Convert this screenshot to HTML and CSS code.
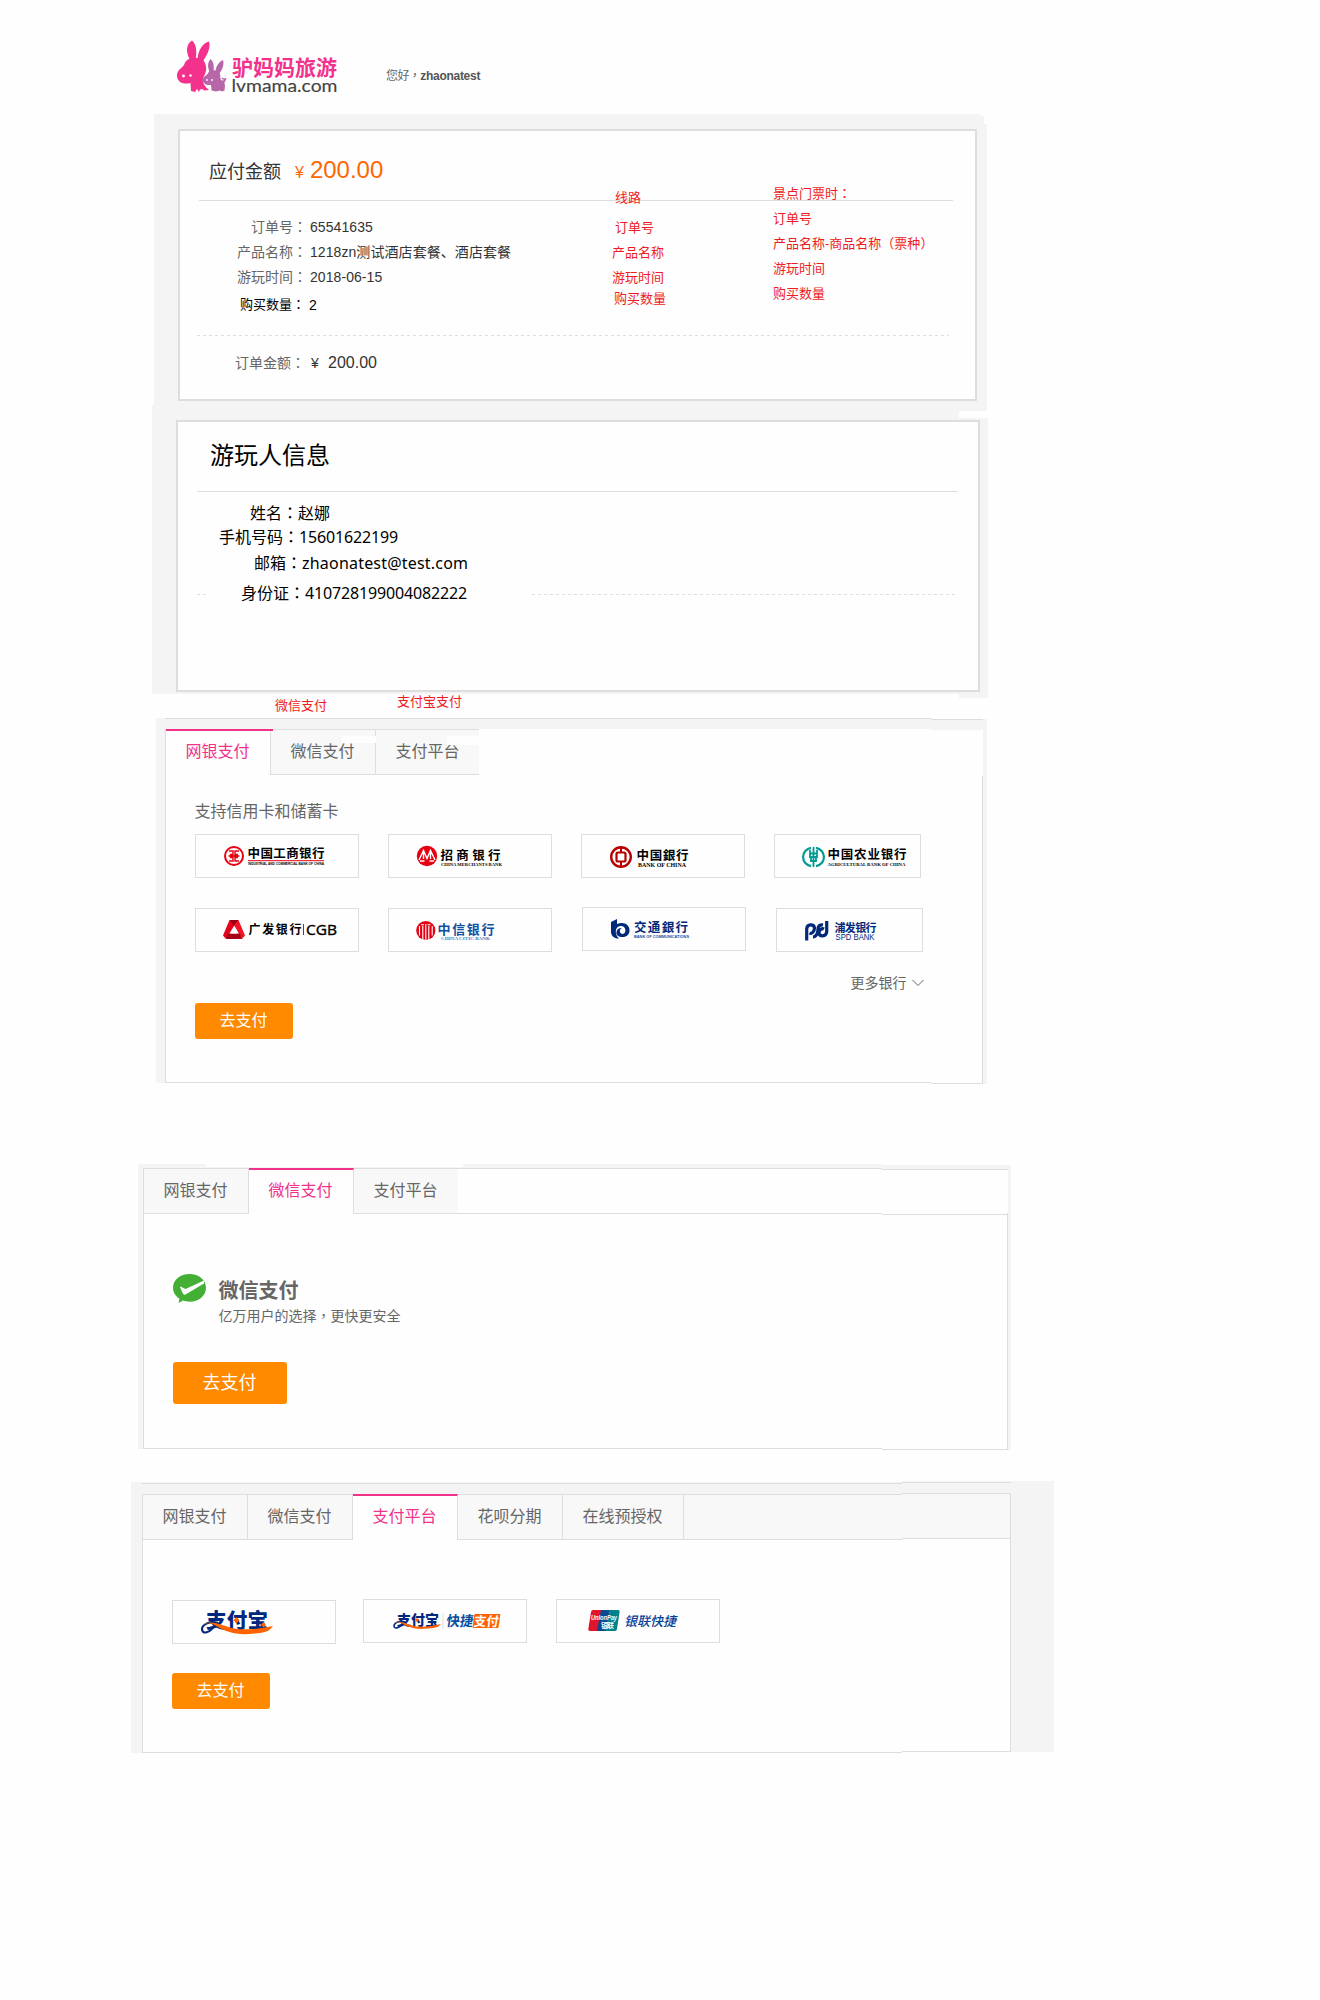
FILE: index.html
```html
<!DOCTYPE html>
<html lang="zh-CN">
<head>
<meta charset="utf-8">
<title>驴妈妈旅游 - 收银台</title>
<link rel="stylesheet" href="styles.css">
</head>
<body>
<header class="header">
  <svg class="logo" width="170" height="60" viewBox="0 0 170 60">
    <g fill="#f2328c">
      <path d="M14 22C9.500 14 10 6 16 2.500C20.500 6 21 14 19.500 22z"/>
      <path d="M21.500 21C22 12 27 5 33 3.500C35 10 31 17 27 23z"/>
      <path d="M12 21.500C16 19 25 19 28 23C31 28 31 34 27.500 39C26 43 27 47 33 52L28 52.500L26.500 51L24 51.500L23 54L21 51L19 54L15 53L14.500 45C7 47 1 44 1 37.500C1 32 6 30 8 27C9 24 10 23 12 21.500z"/>
    </g>
    <g fill="#b766a8">
      <path d="M33.500 34C31 28 32 24 34.500 21C38 24 38 29 37.500 33z"/>
      <path d="M39.500 33C40 28 43 24 47 22C48.500 27 46 32 43 36z"/>
      <path d="M33 33.500C37 31 43 32 44 36C44.500 38 44 40 45 42C46.500 43 48 42.500 47.500 41.500L45.500 41L46 39.500L48 40.500L50.500 40L49.500 43C48.500 44 48 45 49 47L48.500 52.500L46 53.500L44 52.500L40 53.500L35.500 52.500L35 47C30 47.500 26.500 45 26.500 41.500C27 38.500 31 38 33 33.500z"/>
    </g>
    <circle cx="7.500" cy="38" r="1.400" fill="#fff"/><circle cx="14.500" cy="37.500" r="1.200" fill="#fff"/><circle cx="31" cy="42" r="0.900" fill="#fff"/><circle cx="36" cy="42" r="0.900" fill="#fff"/>
    <text class="cjk heavy" x="56" y="37" font-size="21" textLength="105" fill="#f2328c">驴妈妈旅游</text>
    <text class="round" x="55.500" y="54" font-size="18" textLength="106" lengthAdjust="spacingAndGlyphs" fill="#444" stroke="#444" stroke-width=".15">lvmama.com</text>
  </svg>
  <p class="hello">您好<span class="mid-mark" lang="zh-TW">，</span><b>zhaonatest</b></p>
</header>

<section class="order">
  <div class="card order-card">
    <h2 class="due">应付金额<span class="due-sign">¥</span><span class="due-sum">200.00</span></h2>
    <hr class="rule">
    <dl class="facts">
      <dt>订单号<span class="mid-mark" lang="zh-TW">：</span></dt><dd>65541635</dd>
      <dt>产品名称<span class="mid-mark" lang="zh-TW">：</span></dt><dd>1218zn测试酒店套餐、酒店套餐</dd>
      <dt>游玩时间<span class="mid-mark" lang="zh-TW">：</span></dt><dd>2018-06-15</dd>
    </dl>
    <dl class="facts count"><dt>购买数量<span class="mid-mark" lang="zh-TW">：</span></dt><dd>2</dd></dl>
    <div class="dashes"></div>
    <div class="total"><span>订单金额<span class="mid-mark" lang="zh-TW">：</span></span><i>¥</i><b>200.00</b></div>
    <div class="note n1">线路</div>
    <div class="note n2">订单号</div>
    <div class="note n3">产品名称</div>
    <div class="note n4">游玩时间</div>
    <div class="note n5">购买数量</div>
    <div class="note n6">景点门票时<span class="mid-mark" lang="zh-TW">：</span><br>订单号<br>产品名称-商品名称<span class="mid-mark" lang="zh-TW">（</span>票种<span class="mid-mark" lang="zh-TW">）</span><br>游玩时间<br>购买数量</div>
  </div>
</section>

<section class="guest">
  <div class="card guest-card">
    <h2 class="guest-title">游玩人信息</h2>
    <hr class="rule">
    <p class="g-name">姓名<span class="mid-mark" lang="zh-TW">：</span>赵娜</p>
    <p class="g-phone">手机号码<span class="mid-mark" lang="zh-TW">：</span><span class="num">15601622199</span></p>
    <p class="g-mail">邮箱<span class="mid-mark" lang="zh-TW">：</span><span class="mail">zhaonatest@test.com</span></p>
    <div class="g-id"><span class="dashes short"></span><p>身份证<span class="mid-mark" lang="zh-TW">：</span><span class="num">410728199004082222</span></p><span class="dashes long"></span></div>
  </div>
</section>

<div class="hints"><span class="hint-a">微信支付</span><span class="hint-b">支付宝支付</span></div>

<section class="pay bank-pay">
  <div class="main">
    <div class="lid"></div>
    <div class="body">
      <nav class="tabs">
        <a class="tab on">网银支付</a><a class="tab wiped">微信支付</a><a class="tab last wiped-b">支付平台</a>
      </nav>
      <h3 class="cards-title">支持信用卡和储蓄卡</h3>
      <div class="banks">
        <div class="bank"><svg viewBox="1 1 162 42">
          <circle cx="39" cy="22" r="9" fill="none" stroke="#e60012" stroke-width="2"/>
          <path d="M34 17h4v3.500h-3M44 17h-4v3.500h3M34 27h4v-3.500h-3M44 27h-4v-3.500h3M33.500 22h11M38 17v10M40 17v10" fill="none" stroke="#e60012" stroke-width="1.400"/>
          <text class="cjk heavy" x="52.500" y="24" font-size="12.500" textLength="77">中国工商银行</text>
          <path d="M53 26.700h76" stroke="#e60012"/>
          <text class="sans heavy" x="53" y="31" font-size="3.500" textLength="76" lengthAdjust="spacingAndGlyphs">INDUSTRIAL AND COMMERCIAL BANK OF CHINA</text></svg></div>
        <div class="bank"><svg viewBox="1 1 162 42">
          <circle cx="39" cy="22" r="10.200" fill="#e60012"/>
          <path d="M31 26L35.500 16.500L39 24.500L42.500 16.500L47 26M35.500 17V25M42.500 17V25M32 27h4.500M41.500 27h4.500" fill="none" stroke="#fff" stroke-width="1.400"/>
          <text class="cjk heavy" x="52.500" y="26" font-size="12.500" textLength="60">招商银行</text>
          <text class="serif heavy" x="53" y="32" font-size="5" textLength="61" lengthAdjust="spacingAndGlyphs">CHINA MERCHANTS BANK</text></svg></div>
        <div class="bank"><svg viewBox="1 1 162 42">
          <circle cx="40" cy="23" r="9.800" fill="none" stroke="#b80000" stroke-width="2.400"/>
          <path d="M40 13v5M40 28v5" stroke="#b80000" stroke-width="2"/><rect x="35.500" y="18.500" width="9" height="9" rx="1.500" fill="none" stroke="#b80000" stroke-width="2.200"/>
          <text class="brush" x="55.500" y="25.500" font-size="12.500" textLength="52">中国銀行</text>
          <text class="serif heavy" x="57" y="33" font-size="6" textLength="48" lengthAdjust="spacingAndGlyphs">BANK OF CHINA</text></svg></div>
        <div class="bank clipped"><svg viewBox="1 1 162 42">
          <path d="M37 13.800A9.300 9.300 0 0 0 37 32.200M42 13.800A9.300 9.300 0 0 1 42 32.200" fill="none" stroke="#009b93" stroke-width="2.200"/>
          <path d="M39.500 13v20M36 16v7h7v-7M36 19.500h7M37 23v4h5v-4" fill="none" stroke="#009b93" stroke-width="1.800"/>
          <text class="cjk heavy" x="53.500" y="25" font-size="12.500" textLength="79">中国农业银行</text>
          <text class="serif heavy" x="53.500" y="32" font-size="5" textLength="78" lengthAdjust="spacingAndGlyphs">AGRICULTURAL BANK OF CHINA</text></svg></div>
      </div>
      <div class="banks second">
        <div class="bank"><svg viewBox="1 1 162 42">
          <path d="M34.500 12h9L41 18h-4z" fill="#990012"/><path d="M34.500 12L28 27.500L31 31L39 18z" fill="#e60020"/><path d="M43.500 12L50 27.500L47 31L39 17z" fill="#f01428"/><path d="M31 31L33 25.500h12L47 31z" fill="#a80014"/><path d="M39 20l3 5.500h-6z" fill="#fff"/>
          <text class="cjk heavy" x="53.500" y="26" font-size="12" textLength="53">广发银行</text>
          <path d="M108.500 16v11" stroke="#e60020"/>
          <text class="open" x="111" y="26.500" font-size="14.500" textLength="31" lengthAdjust="spacingAndGlyphs" stroke="#000" stroke-width=".4">CGB</text></svg></div>
        <div class="bank"><svg viewBox="1 1 162 42">
          <circle cx="37.800" cy="22.500" r="9.600" fill="#e60012"/>
          <path d="M37.800 16v16M34.800 18v14M40.800 18v14M31.500 18v9.500M44.200 18v9.500M33 16.800h3M39.600 16.800h3" fill="none" stroke="#fff" stroke-width="1.100"/>
          <text class="brush" x="49.500" y="25.500" font-size="13" textLength="57" fill="#0f4fa2">中信银行</text>
          <text class="serif heavy" x="53" y="32" font-size="5" textLength="49" lengthAdjust="spacingAndGlyphs" fill="#3f7cc0">CHINA CITIC BANK</text></svg></div>
        <div class="bank raised"><svg viewBox="1 1 162 42">
          <path d="M29 15L35 12V17C42 14 48 18 47.500 24C47 30 41 31 37 29.500C32 27 35 20 40 21C37 22 37 27 41 27C45 26 44 19 39 19C33 19 32 27 37 31.500C33 32 29 29 29 25z" fill="#00297a"/>
          <text class="brush" x="52" y="24.500" font-size="12.500" textLength="54" fill="#00297a">交通銀行</text>
          <text class="sans heavy" x="52" y="31" font-size="4" textLength="55" lengthAdjust="spacingAndGlyphs" fill="#2a4c94">BANK OF COMMUNICATIONS</text></svg></div>
        <div class="bank clipped shifted"><svg viewBox="1 1 162 42">
          <path d="M30.700 32.500V21C31 15.500 38 16 38.500 20C38.500 24 35.500 26 33.500 25M37 29C40 29 42 25 42 21C42 16 47 17 47 17M50.700 13V24C50 29 43.500 29 43 25C43 21.500 46 20 48 21" fill="none" stroke="#00297a" stroke-width="3.200"/>
          <text class="cjk heavy" x="58.500" y="23.500" font-size="11" textLength="42" fill="#00297a">浦发银行</text>
          <text class="sans" x="59.500" y="32" font-size="8.500" textLength="39" lengthAdjust="spacingAndGlyphs" fill="#00297a">SPD BANK</text></svg></div>
      </div>
      <div class="more">更多银行<svg width="12" height="8" viewBox="0 0 12 8"><path d="M.5 1L6 6.500L11.500 1" fill="none" stroke="#666"/></svg></div>
      <a class="btn">去支付</a>
    </div>
  </div>
  <div class="tail"><div class="tail-box"></div></div>
</section>

<section class="pay wechat-pay">
  <div class="main">
    <div class="lid"></div>
    <div class="body">
      <nav class="tabs">
        <a class="tab">网银支付</a><a class="tab on">微信支付</a><a class="tab last">支付平台</a><span class="rest"></span>
      </nav>
      <div class="wechat">
        <svg width="33" height="30" viewBox="0 0 33 30"><path d="M16.500 0C26 0 33 6 33 13.800S26 27.800 16.500 27.800C14 27.800 12 27.300 10 26.600L5.500 29L6.500 24.800C2.500 22.300 0 18.300 0 13.800C0 6 7 0 16.500 0z" fill="#43b035"/><path d="M7.500 12.500L12.500 15L31 6.500V9.500L12.500 20.500C10.500 21.500 9.500 19 7 13z" fill="#fff"/></svg>
        <div><h3>微信支付</h3><p>亿万用户的选择<span class="mid-mark" lang="zh-TW">，</span>更快更安全</p></div>
      </div>
      <a class="btn big">去支付</a>
    </div>
  </div>
  <div class="tail"><div class="tail-box"></div></div>
</section>

<section class="pay platform-pay">
  <div class="main">
    <div class="lid"></div>
    <div class="body">
      <nav class="tabs">
        <a class="tab">网银支付</a><a class="tab">微信支付</a><a class="tab on">支付平台</a><a class="tab">花呗分期</a><a class="tab wide">在线预授权</a><span class="rest"></span>
      </nav>
      <div class="platforms">
        <div class="bank lowered"><svg viewBox="1 1 162 42">
          <text class="cjk black" x="34" y="27.500" font-size="20.500" textLength="62" fill="#00287c">支付宝</text>
          <path d="M46 23C38 20 30 25 30 29C30 35 38 33 43 25" fill="none" stroke="#00287c" stroke-width="2.200"/>
          <path d="M31 25C40 18 53 28 66 29C78 30 88 28.500 101 26C97 32 91 33 82 33.500C64 36 53 31 46 27C40 23 36 22 31 25z" fill="#ff6300"/>
          <path d="M64.500 17l3 3.200-3 3.200-3-3.200zM91.500 22l2.500 2.700-2.500 2.700-2.500-2.700z" fill="#ff6300"/></svg></div>
        <div class="bank"><svg viewBox="1 1 162 42">
          <text class="cjk black" x="34" y="26" font-size="14" textLength="42" fill="#00287c">支付宝</text>
          <path d="M42 23C36 21 31 24 31 27C31 30 36 30 40 24" fill="none" stroke="#00287c" stroke-width="1.600"/>
          <path d="M31 24C38 20 46 27 54 27.500C62 28 70 27 78 25C75 29 71 29 65 29.500C52 31 45 28 40 25C37 23 34 23 31 24z" fill="#ff6300"/>
          <path d="M54 19l2 2-2 2-2-2z" fill="#ff6300"/><path d="M80 14v16" stroke="#ddd"/>
          <g transform="skewX(-8)"><text class="cjk heavy" x="86.500" y="27.500" font-size="14" textLength="27" lengthAdjust="spacingAndGlyphs" fill="#0b4f9e">快捷</text>
          <rect x="113.500" y="15" width="26" height="14" rx="1" fill="#ff6300"/><text class="cjk heavy" x="114" y="27" font-size="13" textLength="25" lengthAdjust="spacingAndGlyphs" fill="#fff">支付</text></g></svg></div>
        <div class="bank"><svg viewBox="1 1 162 42">
          <path d="M37 11h9l-4 21h-8q-2 0-1.700-2L35 13q.3-2 2-2z" fill="#e0142d"/><path d="M45 11h9l-4 21h-9z" fill="#0a4a94"/><path d="M54 11h8q2 0 1.600 2L61 30q-.3 2-2 2h-10z" fill="#00828a"/>
          <text class="sans heavy slant" x="35" y="21" font-size="7" textLength="26" lengthAdjust="spacingAndGlyphs" fill="#fff">UnionPay</text>
          <text class="cjk heavy" x="45" y="28.500" font-size="7" textLength="13" fill="#fff">银联</text>
          <text class="cjk mid slant" x="68" y="27" font-size="13" textLength="52" fill="#0b3f96">银联快捷</text></svg></div>
      </div>
      <a class="btn">去支付</a>
    </div>
  </div>
  <div class="tail"><div class="tail-box"><div class="tail-bar"></div></div></div>
</section>
</body>
</html>
```
FILE: styles.css
```css
* { box-sizing: border-box; margin: 0; padding: 0; }
body {
  width: 1320px;
  min-height: 2000px;
  background: #fefefe;
  color: #666;
  font-family: "Liberation Sans", "Noto Sans CJK SC", sans-serif;
  font-size: 14px;
}
h2, h3 { font-weight: normal; }

/* full-width punctuation centred in its cell */
.mid-mark { font-family: "Noto Sans CJK TC", sans-serif; line-height: 1; }

/* header */
.header { display: flex; height: 114px; padding-left: 176px; }
.logo { margin-top: 38px; flex: none; }
.hello { margin: 66px 0 0 40px; font-size: 12px; line-height: 20px; letter-spacing: -.6px; }
.hello b { letter-spacing: -.28px; color: #555; }

/* svg lettering */
.cjk { font-family: "Noto Sans CJK SC", sans-serif; }
.brush { font-family: "Noto Sans CJK SC", sans-serif; font-weight: 700; }
.serif { font-family: "Liberation Serif", serif; }
.sans { font-family: "Liberation Sans", sans-serif; }
.open { font-family: "Open Sans", sans-serif; }
.round { font-family: Lato, sans-serif; }
.mid { font-weight: 500; }
.heavy { font-weight: 700; }
.black { font-weight: 900; }
.slant { font-style: italic; }

/* order and guest cards */
.card { border: 2px solid #ddd; background: #fefefe; height: 272px; }
.rule { border: 0; height: 1px; background: #ddd; }
.dashes { display: block; height: 1px; background: repeating-linear-gradient(90deg, #ddd 0 3px, transparent 3px 6px); }
.order {
  margin-left: 154px; width: 833px; height: 291px; padding: 15px 0 0 24px; background: #f4f4f4;
  clip-path: polygon(0 0, 826px 0, 826px 2px, 830px 2px, 830px 10px, 833px 10px, 833px 100%, 0 100%);
}
.order-card { position: relative; width: 799px; }
.due { display: flex; align-items: baseline; height: 69px; padding: 19px 0 0 29px; font-size: 18px; line-height: 40px; color: #333; }
.due-sign { margin-left: 14px; font-size: 16px; color: #ff6600; }
.due-sum { margin-left: 6px; font-size: 24px; color: #ff6600; }
.order-card .rule { margin-left: 19px; width: 754px; }
.facts { display: grid; grid-template-columns: 127px 1fr; grid-auto-rows: 25px; column-gap: 3px; padding-top: 14px; line-height: 25px; }
.facts dt { text-align: right; }
.facts dd { color: #333; letter-spacing: .07px; }
.facts.count { grid-template-columns: 125px 1fr; grid-auto-rows: 20px; column-gap: 4px; padding-top: 5px; font-size: 13px; line-height: 20px; color: #000; }
.count dd { color: #000; font-size: 14px; }
.order-card .dashes { margin: 20px 0 0 17px; width: 752px; }
.total { display: flex; align-items: baseline; margin-top: 17px; padding-left: 55px; line-height: 20px; }
.total i { margin-left: 6px; width: 17px; font-style: normal; color: #333; }
.total b { font-size: 16px; font-weight: 400; color: #333; }
.note { position: absolute; font-size: 13px; line-height: 20px; color: #ed1c24; white-space: nowrap; }
.n1 { left: 435px; top: 57px; }
.n2 { left: 435px; top: 87px; }
.n3 { left: 432px; top: 112px; }
.n4 { left: 432px; top: 137px; }
.n5 { left: 434px; top: 158px; }
.n6 { left: 593px; top: 50px; line-height: 25px; }

.guest {
  margin-left: 152px; width: 836px; height: 293px; padding: 15px 0 0 24px; background: #f4f4f4;
  clip-path: polygon(0 0, 835px 0, 835px 6px, 807px 6px, 807px 13px, 836px 13px, 836px 293px, 807px 293px, 807px 289px, 0 289px);
}
.guest-card { width: 804px; color: #000; font-family: "Noto Sans", "Noto Sans CJK SC", sans-serif; font-size: 16px; line-height: 24px; }
.guest-title { height: 69px; padding: 13px 0 0 32px; font-size: 24px; line-height: 40px; }
.guest-card .rule { margin-left: 19px; width: 761px; }
.guest-card p { height: 24px; }
.guest-card .g-name { height: 33px; padding: 9px 0 0 72px; }
.g-phone { padding-left: 41px; }
.guest-card .g-mail { height: 26px; padding: 2px 0 0 76px; }
.num { letter-spacing: -.15px; }
.mail { letter-spacing: .2px; }
.g-id { display: flex; align-items: center; margin-top: 7px; padding-left: 19px; }
.g-id p { width: 291px; margin-left: 33px; position: relative; top: -1px; }
.short { width: 11px; }
.long { width: 426px; }

.hints { display: flex; height: 20px; padding-left: 275px; font-size: 13px; line-height: 20px; color: #ed1c24; }
.hint-a { width: 122px; margin-top: -2px; }
.hint-b { margin-top: -6px; }

/* payment panels */
.pay { display: flex; align-items: flex-start; }
.main, .tail { background: #f4f4f4; }
.body { background: #fefefe; border: solid #ddd; border-width: 0 0 1px 1px; }
.tabs { display: flex; height: 46px; font-size: 16px; line-height: 43px; }
.tab { position: relative; width: 105px; padding-left: 19.5px; white-space: nowrap; background: #f8f8f8; border: 1px solid #ddd; border-left: 0; }
.tab.on { border-top: 2px solid #f0328a; border-bottom: 0; background: #fefefe; color: #f0328a; line-height: 41px; }
.tab.last { border-right: 0; }
.tab.wide { width: 121px; }
.btn { display: block; width: 98px; height: 36px; padding-right: 1px; border-radius: 3px; background: #ff8a00; color: #fff; font-size: 16px; line-height: 36px; text-align: center; }
.bank { flex: none; width: 164px; height: 44px; border: 1px solid #ddd; }
.bank svg { display: block; width: 162px; height: 42px; }

.bank-pay { margin-left: 156px; }
.bank-pay .main { width: 775px; padding-left: 9px; }
.bank-pay .lid { height: 11px; border-top: 1px solid #ddd; }
.bank-pay .body { height: 354px; }
.bank-pay .last { width: 103px; }
.bank-pay .on::after { content: ""; position: absolute; left: 104px; top: -2px; width: 3px; height: 2px; background: #f0328a; z-index: 1; }
.wiped::after, .wiped-b::after { content: ""; position: absolute; background: #fefefe; left: 71px; top: 6px; width: 34px; height: 7px; }
.wiped-b::after { width: 36px; height: 9px; }
.bank-pay .tail { display: flex; margin-top: 1px; width: 56px; height: 365px; padding-right: 4px; }
.bank-pay .tail-box {
  width: 52px; border-top: 1px solid #ddd;
  background: linear-gradient(#ddd, #ddd) 51px 56px / 1px 308px no-repeat, linear-gradient(#ddd, #ddd) 0 363px / 52px 1px no-repeat, linear-gradient(#fefefe, #fefefe) 0 10px / 52px 354px no-repeat;
}
.cards-title { height: 20px; margin: 27px 0 12px 28.5px; font-size: 16px; line-height: 20px; }
.banks { display: flex; gap: 29px; padding-left: 29px; }
.banks.second { margin-top: 30px; }
.clipped { width: 147px; overflow: hidden; }
.raised { margin: -1px -1px 0 1px; }
.shifted { margin-left: 2px; }
.more { display: flex; align-items: center; gap: 5px; height: 20px; margin: 21px 0 10px 684.5px; line-height: 20px; }
.bank-pay .btn { margin-left: 29px; }

.wechat-pay { margin: 80px 0 0 138px; }
.wechat-pay .main { width: 744px; padding-left: 5px; }
.wechat-pay .lid { height: 4px; background: linear-gradient(#fefefe, #fefefe) 63px 0 / 257px 3px no-repeat; }
.wechat-pay .body { height: 281px; }
.wechat-pay .last { width: 104px; }
.rest { flex: 1; border: solid #ddd; border-width: 1px 0; }
.wechat-pay .tail { margin-top: 1px; width: 129px; height: 285px; padding: 4px 3px 0 0; }
.wechat-pay .tail-box {
  height: 281px; border-top: 1px solid #ddd;
  background: linear-gradient(#ddd, #ddd) 125px 43px / 1px 237px no-repeat, linear-gradient(#ddd, #ddd) 0 44px / 126px 1px no-repeat, linear-gradient(#ddd, #ddd) 0 279px / 126px 1px no-repeat, #fefefe;
}
.wechat { display: flex; gap: 12.5px; height: 88px; margin: 60px 0 0 29px; }
.wechat h3 { height: 24px; margin-top: 5px; font-size: 20px; line-height: 24px; font-weight: 700; }
.wechat p { margin-top: 3px; line-height: 20px; }
.btn.big { width: 114px; height: 42px; margin-left: 29px; font-size: 18px; line-height: 42px; }

.platform-pay { margin: 32px 0 0 131px; }
.platform-pay .main { width: 771px; padding-left: 11px; }
.platform-pay .lid { height: 12px; background: linear-gradient(#ddd, #ddd) 0 1px / 100% 1px no-repeat; }
.platform-pay .body { height: 259px; }
.platform-pay .rest { background: #f8f8f8; }
.platform-pay .tail { display: flex; margin-top: -1px; width: 152px; height: 271px; padding: 0 43px 0 0; }
.platform-pay .tail-box { width: 109px; padding-top: 12px; background: linear-gradient(#ddd, #ddd) 0 1px / 109px 1px no-repeat, linear-gradient(#ddd, #ddd) 108px 12px / 1px 259px no-repeat, linear-gradient(#ddd, #ddd) 0 270px / 109px 1px no-repeat, linear-gradient(#fefefe, #fefefe) 0 12px / 109px 259px no-repeat; }
.tail-bar { height: 46px; border: 1px solid #ddd; border-left: 0; background: #f8f8f8; }
.platforms { display: flex; padding: 59px 0 29px 29px; }
.platforms .bank + .bank { margin-left: 29px; }
.platforms .lowered { margin: 1px -2px 0 0; }
.platform-pay .btn { margin-left: 29px; }
```
